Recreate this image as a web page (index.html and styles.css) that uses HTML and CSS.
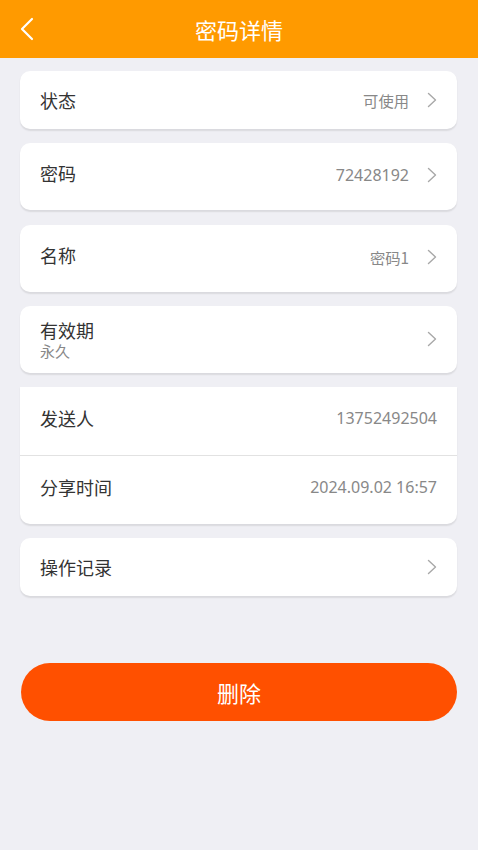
FILE: index.html
```html
<!DOCTYPE html>
<html lang="zh">
<head>
<meta charset="utf-8">
<title>密码详情</title>
<link rel="stylesheet" href="styles.css">
</head>
<body>
<header class="topbar">
  <svg class="back" width="16" height="24" viewBox="0 0 16 24"><path d="M13 2 L3 12 L13 22" fill="none" stroke="#fff" stroke-width="2.2" stroke-linecap="round" stroke-linejoin="round"/></svg>
  <h1 class="title">密码详情</h1>
</header>
<main class="content">
  <section class="card">
    <div class="row r-short">
      <span class="label">状态</span>
      <span class="value cn">可使用</span>
      <svg class="chev" width="10" height="16" viewBox="0 0 10 16"><path d="M1.5 1.5 L8.5 8 L1.5 14.5" fill="none" stroke="#a8a8a8" stroke-width="1.4" stroke-linecap="round" stroke-linejoin="round"/></svg>
    </div>
  </section>
  <section class="card">
    <div class="row r-tall">
      <span class="label">密码</span>
      <span class="value num shift">72428192</span>
      <svg class="chev shift2" width="10" height="16" viewBox="0 0 10 16"><path d="M1.5 1.5 L8.5 8 L1.5 14.5" fill="none" stroke="#a8a8a8" stroke-width="1.4" stroke-linecap="round" stroke-linejoin="round"/></svg>
    </div>
  </section>
  <section class="card">
    <div class="row r-tall">
      <span class="label">名称</span>
      <span class="value cn shift">密码1</span>
      <svg class="chev shift2" width="10" height="16" viewBox="0 0 10 16"><path d="M1.5 1.5 L8.5 8 L1.5 14.5" fill="none" stroke="#a8a8a8" stroke-width="1.4" stroke-linecap="round" stroke-linejoin="round"/></svg>
    </div>
  </section>
  <section class="card">
    <div class="row r-two">
      <div class="stack">
        <span class="label">有效期</span>
        <span class="sub">永久</span>
      </div>
      <svg class="chev" width="10" height="16" viewBox="0 0 10 16"><path d="M1.5 1.5 L8.5 8 L1.5 14.5" fill="none" stroke="#a8a8a8" stroke-width="1.4" stroke-linecap="round" stroke-linejoin="round"/></svg>
    </div>
  </section>
  <section class="card square-top">
    <div class="row r-info">
      <span class="label">发送人</span>
      <span class="value num">13752492504</span>
    </div>
    <div class="divider"></div>
    <div class="row r-info">
      <span class="label">分享时间</span>
      <span class="value num">2024.09.02 16:57</span>
    </div>
  </section>
  <section class="card">
    <div class="row r-short">
      <span class="label">操作记录</span>
      <span class="value"></span>
      <svg class="chev" width="10" height="16" viewBox="0 0 10 16"><path d="M1.5 1.5 L8.5 8 L1.5 14.5" fill="none" stroke="#a8a8a8" stroke-width="1.4" stroke-linecap="round" stroke-linejoin="round"/></svg>
    </div>
  </section>
  <button class="delete" type="button">删除</button>
</main>
</body>
</html>
```

FILE: styles.css
```css
* { box-sizing: border-box; }
html, body { margin: 0; padding: 0; }
body {
  background: #efeff4;
  font-family: "Noto Sans", "Noto Sans CJK SC", sans-serif;
  width: 478px;
  height: 850px;
  overflow: hidden;
}
.topbar {
  height: 58px;
  background: #ff9a00;
  display: flex;
  align-items: center;
  justify-content: center;
  position: relative;
}
.back {
  position: absolute;
  left: 19px;
  top: 17px;
}
.title {
  margin: 0;
  color: #fff;
  font-size: 22px;
  font-weight: 400;
  line-height: 28px;
  font-family: "Noto Sans CJK SC", sans-serif;
}
.content {
  padding: 13px 21px 0 20px;
  display: flex;
  flex-direction: column;
}
.card {
  background: #fff;
  border-radius: 10px;
  box-shadow: 0 1.5px 1.5px rgba(0, 0, 0, 0.09);
  margin-bottom: 14.3px;
}
.card.square-top { border-radius: 0 0 10px 10px; }
.row {
  display: flex;
  align-items: flex-start;
  padding: 0 20px;
}
.r-short { height: 58px; padding-top: 17px; }
.r-tall { height: 67px; padding-top: 18px; }
.r-two { height: 67px; padding-top: 12px; }
.r-info { height: 68px; padding-top: 19px; }
.label {
  font-family: "Noto Sans CJK SC", sans-serif;
  font-size: 18px;
  line-height: 24px;
  color: #333;
}
.value {
  margin-left: auto;
  font-size: 15.5px;
  line-height: 24px;
  color: #888;
}
.value.cn { font-family: "Noto Sans CJK SC", sans-serif; font-size: 15.3px; }
.value.num { font-size: 16px; }
.value.shift { margin-top: 2px; }
.chev { margin-left: 18px; margin-top: 4px; flex: none; }
.chev.shift2 { margin-top: 6px; }
.stack { display: flex; flex-direction: column; }
.sub {
  font-family: "Noto Sans CJK SC", sans-serif;
  font-size: 15px;
  line-height: 18px;
  color: #888;
}
.r-two .chev { margin-left: auto; margin-top: 13px; }
.divider { height: 1px; background: #e2e2e2; }
.delete {
  margin-top: 52px;
  margin-left: 1px;
  height: 58px;
  border: none;
  border-radius: 29px;
  background: #ff5000;
  color: #fff;
  font-family: "Noto Sans CJK SC", sans-serif;
  font-size: 22px;
  padding: 0;
}
```
